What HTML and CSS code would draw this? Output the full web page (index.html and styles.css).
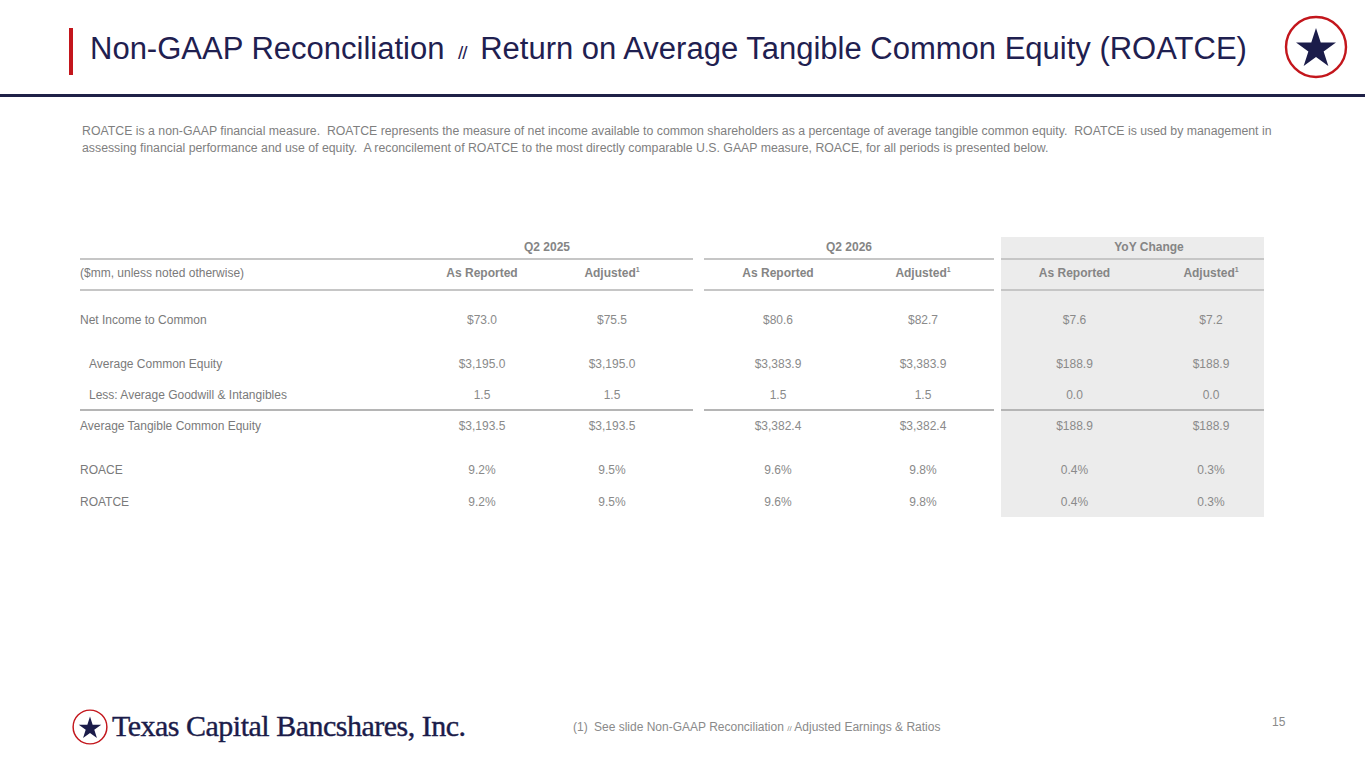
FILE: index.html
```html
<!DOCTYPE html>
<html>
<head>
<meta charset="utf-8">
<link rel="stylesheet" href="styles.css">
</head>
<body>
<div class="page">
  <header class="top">
    <div class="title-wrap">
      <span class="redbar"></span>
      <h1 class="title">Non-GAAP Reconciliation <span class="sep">//</span> Return on Average Tangible Common Equity (ROATCE)</h1>
    </div>
    <svg class="star-logo" viewBox="-32 -32 64 64" width="64" height="64">
      <circle cx="0" cy="0" r="30" fill="#fff" stroke="#c3161c" stroke-width="2.4"/>
      <polygon transform="translate(0 2)" fill="#1b1c4a" points="0,-21 4.72,-6.49 19.97,-6.49 7.63,2.48 12.34,17 0,8.02 -12.34,17 -7.63,2.48 -19.97,-6.49 -4.72,-6.49"/>
    </svg>
  </header>
  <div class="rule"></div>

  <p class="intro">ROATCE is a non-GAAP financial measure.&nbsp; ROATCE represents the measure of net income available to common shareholders as a percentage of average tangible common equity.&nbsp; ROATCE is used by management in<br>assessing financial performance and use of equity.&nbsp; A reconcilement of ROATCE to the most directly comparable U.S. GAAP measure, ROACE, for all periods is presented below.</p>

  <div class="tbl">
    <div class="row r-group">
      <div class="c g1 line">Q2 2025</div>
      <div class="c gap"></div>
      <div class="c g2 line">Q2 2026</div>
      <div class="c gap"></div>
      <div class="c g3 line shade">YoY Change</div>
    </div>
    <div class="row r-head">
      <div class="c lab line">($mm, unless noted otherwise)</div>
      <div class="c v line">As Reported</div>
      <div class="c v line">Adjusted<sup>1</sup></div>
      <div class="c gap"></div>
      <div class="c v line">As Reported</div>
      <div class="c v line">Adjusted<sup>1</sup></div>
      <div class="c gap"></div>
      <div class="c v line shade">As Reported</div>
      <div class="c v line shade last">Adjusted<sup>1</sup></div>
    </div>
    <div class="row r-ni">
      <div class="c lab">Net Income to Common</div>
      <div class="c v">$73.0</div>
      <div class="c v">$75.5</div>
      <div class="c gap"></div>
      <div class="c v">$80.6</div>
      <div class="c v">$82.7</div>
      <div class="c gap"></div>
      <div class="c v shade">$7.6</div>
      <div class="c v shade last">$7.2</div>
    </div>
    <div class="row r-ace">
      <div class="c lab ind">Average Common Equity</div>
      <div class="c v">$3,195.0</div>
      <div class="c v">$3,195.0</div>
      <div class="c gap"></div>
      <div class="c v">$3,383.9</div>
      <div class="c v">$3,383.9</div>
      <div class="c gap"></div>
      <div class="c v shade">$188.9</div>
      <div class="c v shade last">$188.9</div>
    </div>
    <div class="row r-less">
      <div class="c lab ind thin">Less: Average Goodwill &amp; Intangibles</div>
      <div class="c v thin">1.5</div>
      <div class="c v thin">1.5</div>
      <div class="c gap"></div>
      <div class="c v thin">1.5</div>
      <div class="c v thin">1.5</div>
      <div class="c gap"></div>
      <div class="c v shade thin">0.0</div>
      <div class="c v shade thin last">0.0</div>
    </div>
    <div class="row r-atce">
      <div class="c lab">Average Tangible Common Equity</div>
      <div class="c v">$3,193.5</div>
      <div class="c v">$3,193.5</div>
      <div class="c gap"></div>
      <div class="c v">$3,382.4</div>
      <div class="c v">$3,382.4</div>
      <div class="c gap"></div>
      <div class="c v shade">$188.9</div>
      <div class="c v shade last">$188.9</div>
    </div>
    <div class="row r-roace">
      <div class="c lab">ROACE</div>
      <div class="c v">9.2%</div>
      <div class="c v">9.5%</div>
      <div class="c gap"></div>
      <div class="c v">9.6%</div>
      <div class="c v">9.8%</div>
      <div class="c gap"></div>
      <div class="c v shade">0.4%</div>
      <div class="c v shade last">0.3%</div>
    </div>
    <div class="row r-roatce">
      <div class="c lab">ROATCE</div>
      <div class="c v">9.2%</div>
      <div class="c v">9.5%</div>
      <div class="c gap"></div>
      <div class="c v">9.6%</div>
      <div class="c v">9.8%</div>
      <div class="c gap"></div>
      <div class="c v shade">0.4%</div>
      <div class="c v shade last">0.3%</div>
    </div>
  </div>

  <footer class="foot">
    <div class="brand">
      <svg class="brand-mark" viewBox="-32 -32 64 64" width="36" height="36">
        <circle cx="0" cy="0" r="30" fill="#fff" stroke="#c3161c" stroke-width="2.6"/>
        <polygon transform="translate(0 2.5)" fill="#1b1c4a" points="0,-21 4.72,-6.49 19.97,-6.49 7.63,2.48 12.34,17 0,8.02 -12.34,17 -7.63,2.48 -19.97,-6.49 -4.72,-6.49"/>
      </svg>
      <span class="brand-name">Texas Capital Bancshares, Inc.</span>
    </div>
    <div class="note"><span class="num">(1)</span>See slide Non-GAAP Reconciliation <span class="sep-s">//</span> Adjusted Earnings &amp; Ratios</div>
    <div class="pageno">15</div>
  </footer>
</div>
</body>
</html>
```

FILE: styles.css
```css
html, body {
  margin: 0;
  padding: 0;
  background: #ffffff;
}
.page {
  width: 1365px;
  height: 768px;
  display: flex;
  flex-direction: column;
  font-family: "Liberation Sans", Arial, sans-serif;
  overflow: hidden;
}
.top {
  height: 94px;
  display: flex;
  align-items: center;
  justify-content: space-between;
  box-sizing: border-box;
  padding: 8px 17px 0 69px;
}
.title-wrap {
  display: flex;
  align-items: center;
}
.redbar {
  width: 4px;
  height: 47px;
  background: #c3161c;
  margin-right: 17px;
}
.title {
  margin: 0;
  font-weight: 400;
  font-size: 31px;
  line-height: 40px;
  color: #1f2050;
  white-space: nowrap;
}
.sep {
  font-size: 19px;
  letter-spacing: -1px;
  margin: 0 5px;
}
.star-logo {
  display: block;
  margin-bottom: 8px;
}
.rule {
  height: 3px;
  background: #1f2147;
}
.intro {
  margin: 26px 0 0 0;
  padding-left: 82px;
  font-size: 12.3px;
  line-height: 17px;
  color: #7f7f7f;
  white-space: nowrap;
}
.tbl {
  margin: 80px 0 0 80px;
  width: 1184px;
  font-size: 12px;
  line-height: 14px;
  color: #8a8a8a;
}
.row {
  display: grid;
  grid-template-columns: 353px 98px 162px 11px 148px 142px 7px 147px 116px;
}
.c {
  box-sizing: border-box;
  white-space: nowrap;
}
.v {
  text-align: center;
}
.last {
  padding-left: 10px;
}
.lab {
  color: #7a7a7a;
}
.ind {
  padding-left: 9px;
}
.shade {
  background: #ececec;
}
.line {
  border-bottom: 2px solid #c6c6c6;
}
.thin {
  border-bottom: 2px solid #b5b5b5;
}
.r-group .c, .r-head .c {
  font-weight: 700;
  color: #858585;
}
.r-head .lab {
  font-weight: 400;
  color: #7a7a7a;
}
.g1 { grid-column: 1 / 4; text-align: center; padding-left: 321px; }
.g2 { grid-column: 5 / 7; text-align: center; }
.g3 { grid-column: 8 / 10; text-align: center; padding-left: 33px; }
.r-group .c { height: 23px; padding-top: 3px; }
.r-group .gap { border: none; }
.r-head .c { height: 31px; padding-top: 6px; }
.r-ni .c { height: 57px; padding-top: 22px; }
.r-ace .c { height: 31px; padding-top: 9px; }
.r-less .c { height: 32px; padding-top: 9px; }
.r-less .gap { border: none; }
.r-atce .c { height: 44px; padding-top: 8px; }
.r-roace .c { height: 31px; padding-top: 8px; }
.r-roatce .c { height: 31px; padding-top: 9px; }
sup {
  font-size: 7px;
  line-height: 0;
  vertical-align: 5px;
}
.foot {
  margin-top: auto;
  height: 54px;
  margin-bottom: 14px;
  display: flex;
  align-items: center;
  box-sizing: border-box;
  padding-left: 72px;
}
.brand {
  display: flex;
  align-items: center;
  width: 501px;
}
.brand-mark {
  display: block;
  margin-right: 4px;
}
.brand-name {
  font-family: "Liberation Serif", "Times New Roman", serif;
  font-size: 30px;
  letter-spacing: -0.5px;
  color: #1b1c4a;
  -webkit-text-stroke: 0.4px #1b1c4a;
  line-height: 36px;
  position: relative;
  top: -1px;
}
.note {
  font-size: 12px;
  color: #8a8a8a;
  width: 699px;
  white-space: nowrap;
}
.note .num {
  display: inline-block;
  width: 21px;
}
.sep-s {
  font-size: 8px;
}
.pageno {
  font-size: 12px;
  color: #8a8a8a;
  margin-top: -10px;
}
```
